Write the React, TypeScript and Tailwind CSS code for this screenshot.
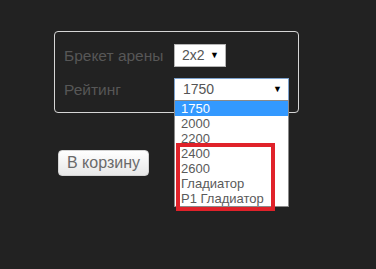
import React from 'react';

const options = ['1750', '2000', '2200', '2400', '2600', 'Гладиатор', 'Р1 Гладиатор'];

const Arrow = () => <span className="text-[9px] leading-none text-black">▼</span>;

export default function App() {
  return (
    <div className="w-[376px] h-[269px] bg-[#222222] font-['Liberation_Sans',Arial,sans-serif] pt-[31px] pl-[54px]">
      <div className="relative w-[245px] h-[82px] border border-[#d6d6d6] rounded-[4px] pt-[12px] pl-[9px] flex flex-col gap-[11px]">
        <div className="flex items-center h-[23px]">
          <span className="w-[110px] text-[15.5px] text-[#575757]">Брекет арены</span>
          <div className="w-[52px] h-[23px] bg-white border border-[#b5b5b5] flex items-center justify-between pl-[7px] pr-[6px] text-[14px] text-[#555]">
            <span>2x2</span>
            <Arrow />
          </div>
        </div>
        <div className="flex items-center h-[23px]">
          <span className="w-[110px] text-[15.5px] text-[#575757]">Рейтинг</span>
          <div className="relative">
            <div className="w-[115px] h-[23px] bg-white border border-[#7da2ce] flex items-center justify-between pl-[8px] pr-[6px] text-[14px] text-[#555]">
              <span>1750</span>
              <Arrow />
            </div>
            <div className="absolute left-0 top-[22px] w-[115px] bg-white border border-[#8a8a8a] z-10">
              {options.map((o, i) => (
                <div
                  key={o}
                  className={
                    i === 0
                      ? 'h-[15px] leading-[15px] pl-[6px] text-[13px] bg-[#3399ff] text-white'
                      : 'h-[15px] leading-[15px] pl-[6px] text-[13px] text-[#5a5a5a]'
                  }
                >
                  {o}
                </div>
              ))}
            </div>
            <div className="absolute left-[2px] top-[65px] w-[99px] h-[68px] border-[4px] border-[#e0222a] z-20" />
          </div>
        </div>
      </div>
      <button className="mt-[37px] ml-[4px] w-[91px] h-[26px] rounded-[4px] border border-[#d4d4d4] bg-gradient-to-b from-white to-[#e8e8e8] text-[16px] text-[#6a6a6a] flex items-center justify-center">
        В корзину
      </button>
    </div>
  );
}
